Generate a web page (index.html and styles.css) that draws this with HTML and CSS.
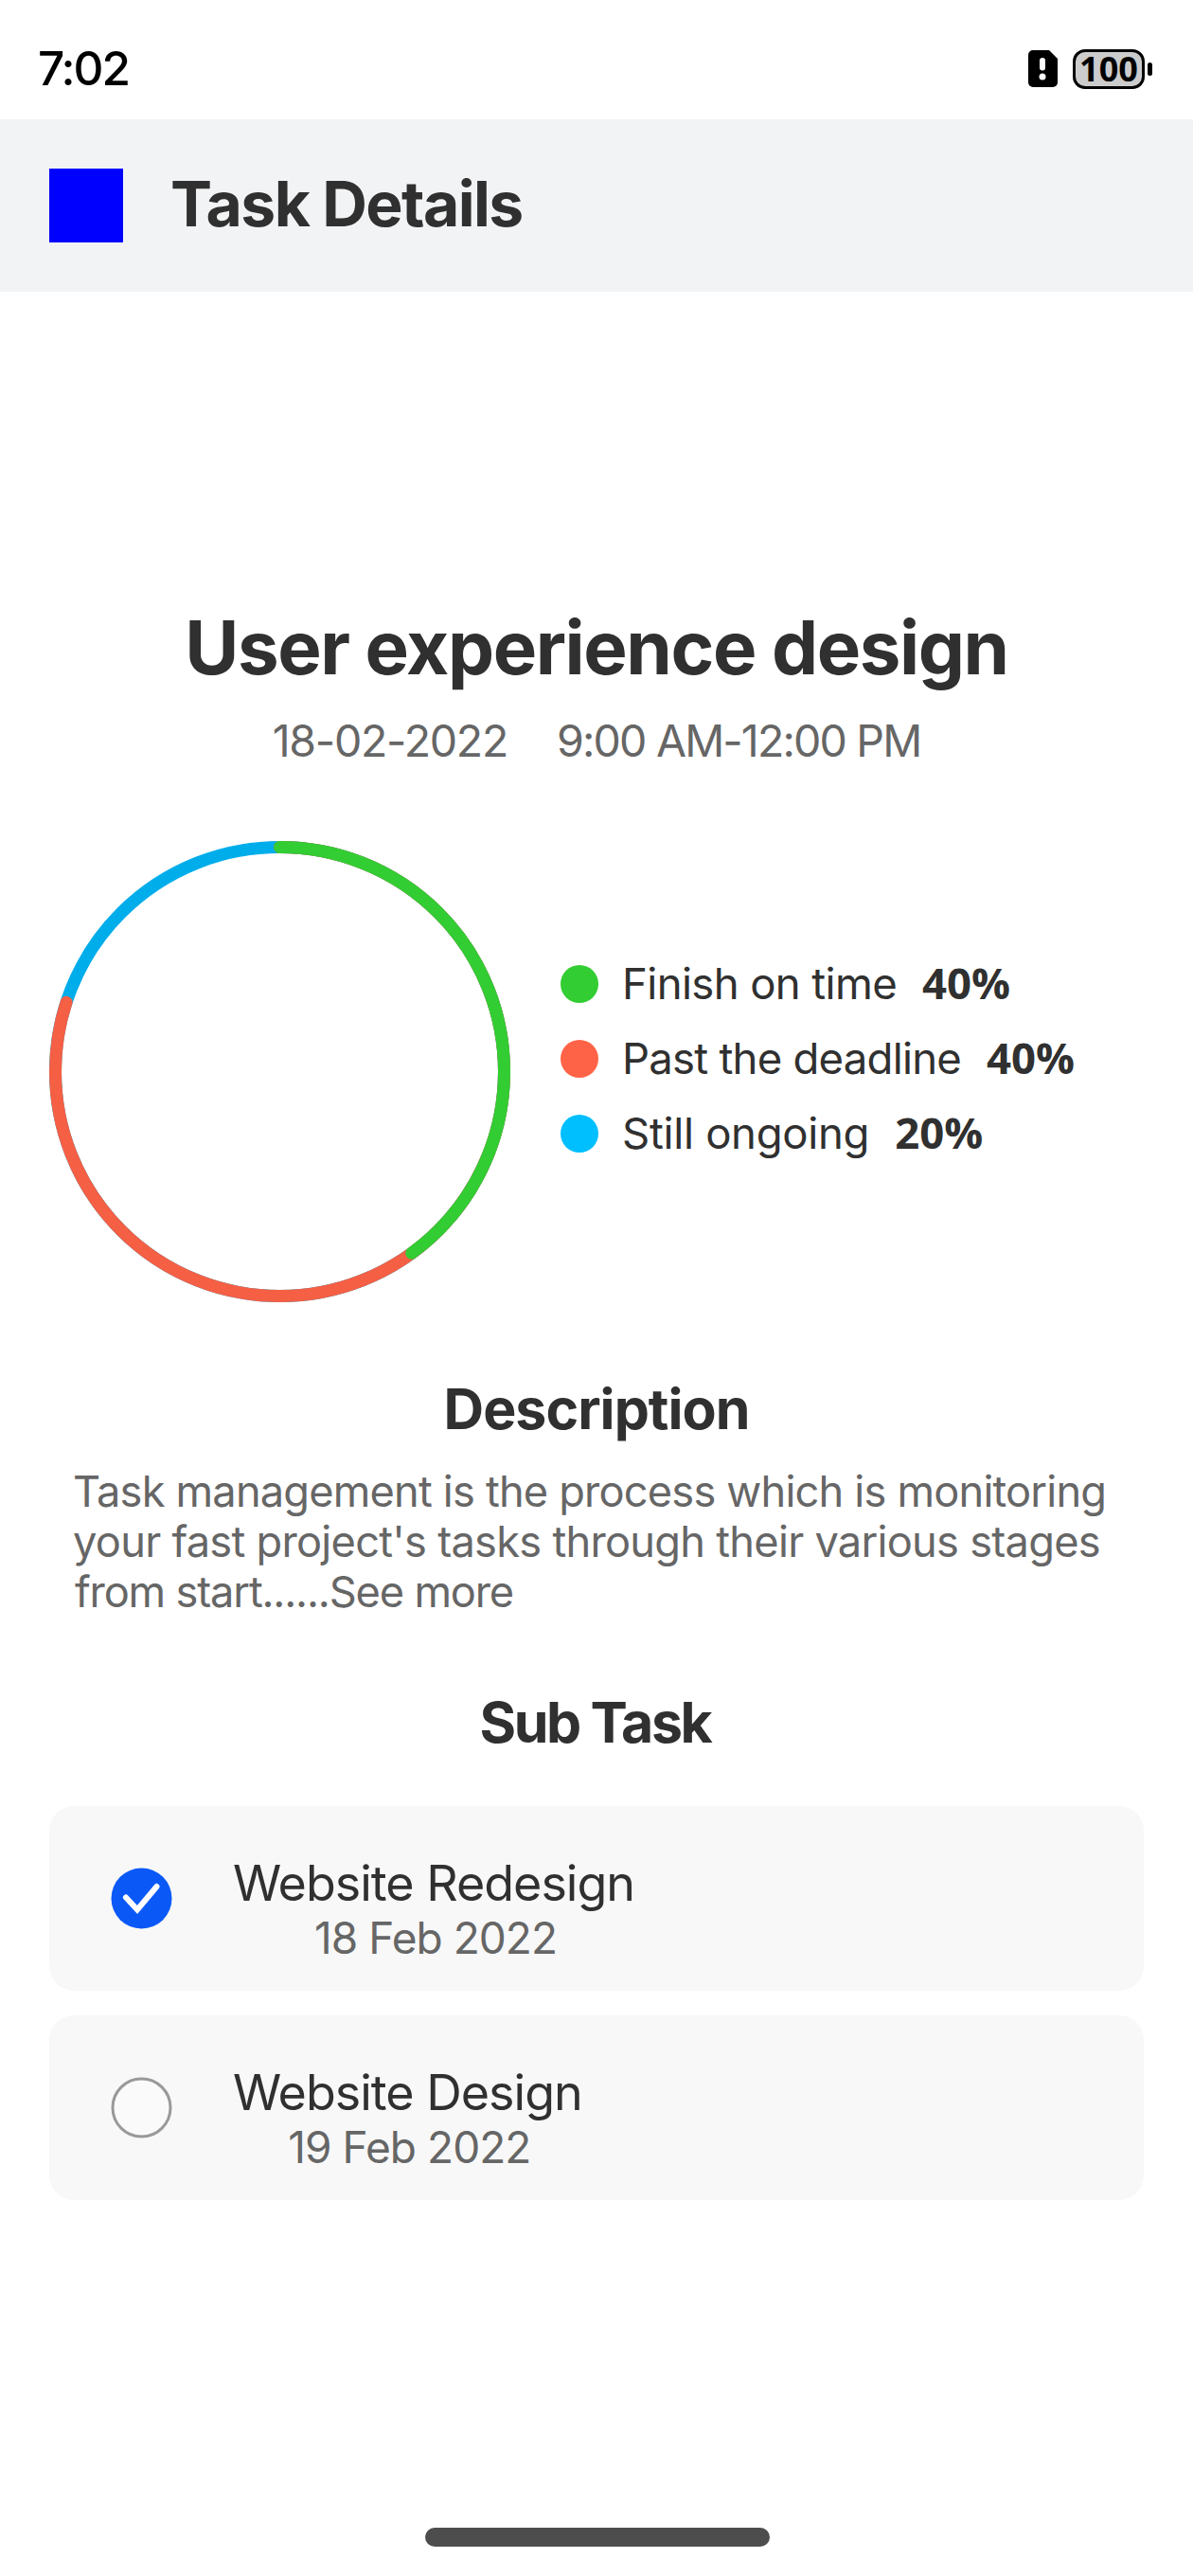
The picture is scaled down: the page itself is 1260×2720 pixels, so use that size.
FILE: index.html
```html
<!DOCTYPE html>
<html lang="en">
<head>
<meta charset="utf-8">
<title>Task Details</title>
<link rel="stylesheet" href="styles.css">
</head>
<body>
<div class="screen">
  <div class="status-bar">
    <span class="clock">7:02</span>
    <div class="status-icons">
      <svg class="sim-icon" viewBox="0 0 31 39" width="31" height="39">
        <path d="M5 0H22L31 9V34a5 5 0 0 1-5 5H5a5 5 0 0 1-5-5V5a5 5 0 0 1 5-5Z" fill="#000"/>
        <path d="M15 11V18.500" stroke="#fff" stroke-width="6" stroke-linecap="round"/>
        <circle cx="15" cy="28" r="3.500" fill="#fff"/>
      </svg>
      <div class="battery"><span class="battery-level">100</span></div>
      <div class="battery-tip"></div>
    </div>
  </div>

  <header class="app-bar">
    <div class="back-button"></div>
    <h1 class="app-title">Task Details</h1>
  </header>

  <main class="content">
    <h2 class="task-title">User experience design</h2>
    <div class="task-time">
      <span class="task-date">18-02-2022</span>
      <span class="task-hours">9:00 AM-12:00 PM</span>
    </div>

    <section class="progress">
      <svg class="ring" viewBox="0 0 487 487" width="487" height="487">
        <g fill="none" stroke-width="13" stroke-linecap="round" transform="rotate(-90 243.500 243.500)">
          <circle cx="243.500" cy="243.500" r="237" stroke="#00adeb"/>
          <circle cx="243.500" cy="243.500" r="237" stroke="#f55f44" pathLength="100" stroke-dasharray="80 100"/>
          <circle cx="243.500" cy="243.500" r="237" stroke="#32cd32" pathLength="100" stroke-dasharray="40 100"/>
        </g>
      </svg>
      <ul class="legend">
        <li class="legend-row"><i class="dot dot-done"></i><span class="legend-label">Finish on time</span><b class="legend-value">40%</b></li>
        <li class="legend-row"><i class="dot dot-late"></i><span class="legend-label label-late">Past the deadline</span><b class="legend-value">40%</b></li>
        <li class="legend-row"><i class="dot dot-ongoing"></i><span class="legend-label label-ongoing">Still ongoing</span><b class="legend-value">20%</b></li>
      </ul>
    </section>

    <h3 class="section-title description-title">Description</h3>
    <p class="description">Task management is the process which is monitoring<br><span class="description-middle">your fast project's tasks through their various stages</span><br><span class="description-end">from start......See more</span></p>

    <h3 class="section-title subtask-title">Sub Task</h3>
    <div class="subtasks">
      <div class="card">
        <svg class="check" viewBox="0 0 65 65" width="65" height="65">
          <circle cx="32.500" cy="32.500" r="32" fill="#0a59f7"/>
          <path d="M16 31.500L28 44.500L48.500 20" fill="none" stroke="#fff" stroke-width="6" stroke-linecap="round" stroke-linejoin="miter"/>
        </svg>
        <div class="card-text">
          <span class="card-title">Website Redesign</span>
          <span class="card-date">18 Feb 2022</span>
        </div>
      </div>
      <div class="card">
        <svg class="check" viewBox="0 0 65 65" width="65" height="65">
          <circle cx="32.500" cy="32.500" r="30.500" fill="#fafafa" stroke="#999" stroke-width="3"/>
        </svg>
        <div class="card-text">
          <span class="card-title">Website Design</span>
          <span class="card-date">19 Feb 2022</span>
        </div>
      </div>
    </div>
  </main>
  <div class="home-area"><div class="home-indicator"></div></div>
</div>
</body>
</html>
```
FILE: styles.css
```css
* { box-sizing: border-box; }
body { margin: 0; background: #fff; font-family: Inter, "Noto Sans", sans-serif; color: #303030; }
h1, h2, h3, p, ul { margin: 0; padding: 0; font-weight: 650; }
.screen { width: 1260px; height: 2720px; display: flex; flex-direction: column; background: #fff; }

.status-bar { height: 126px; display: flex; justify-content: space-between; padding: 42px 43px 0 40px; color: #000; }
.clock { font-size: 49.500px; line-height: 60px; font-weight: 500; letter-spacing: -2px; }
.status-icons { display: flex; align-items: center; height: 62px; }
.sim-icon { display: block; margin-right: 16px; margin-bottom: 2px; }
.battery { width: 76px; height: 42px; border: 3px solid #000; border-radius: 13px; background: #ccc; display: flex; align-items: center; justify-content: center; }
.battery-level { font-family: "Open Sans", sans-serif; font-size: 36px; line-height: 36px; font-weight: 700; padding-bottom: 1px; }
.battery-tip { width: 5px; height: 14px; margin-left: 3px; border-radius: 3px; background: #000; }

.app-bar { height: 182px; background: #f1f3f5; display: flex; align-items: center; padding: 0 52px; gap: 50px; }
.back-button { width: 78px; height: 78px; background: #00f; }
.app-title { font-size: 66px; line-height: 78px; letter-spacing: -1.620px; padding-bottom: 4px; }

.content { flex: 1; display: flex; flex-direction: column; padding: 330px 52px 0; }
.task-title { font-size: 78px; line-height: 92px; text-align: center; letter-spacing: -1.430px; }
.task-time { display: flex; justify-content: center; gap: 52px; margin-top: 24px; font-size: 46.500px; line-height: 56px; color: #666; }
.task-date { letter-spacing: -1.260px; }
.task-hours { letter-spacing: -1.830px; }

.progress { display: flex; align-items: center; margin-top: 78px; }
.ring { display: block; flex: none; }
.legend { list-style: none; margin-left: 52px; margin-bottom: 27px; display: flex; flex-direction: column; gap: 26px; }
.legend-row { display: flex; align-items: center; height: 53px; font-size: 45.500px; line-height: 53px; }
.dot { width: 40px; height: 40px; border-radius: 50%; margin-right: 25px; margin-left: 1px; }
.dot-done { background: #32cd32; }
.dot-late { background: #ff6347; }
.dot-ongoing { background: #00bfff; }
.legend-label { letter-spacing: -0.620px; margin-right: 27px; font-weight: 400; padding-bottom: 2px; }
.label-late { letter-spacing: -0.770px; }
.label-ongoing { letter-spacing: -0.300px; }
.legend-value { font-family: "Open Sans", sans-serif; font-weight: 700; padding-bottom: 4px; }

.section-title { font-size: 59px; line-height: 70px; text-align: center; letter-spacing: -0.980px; }
.description-title { margin-top: 78px; }
.description { margin-top: 25px; padding-left: 25px; font-size: 45.200px; line-height: 53px; font-weight: 400; letter-spacing: -0.810px; color: #666; white-space: nowrap; }
.description-middle { letter-spacing: -0.730px; }
.description-end { letter-spacing: -1.160px; margin-left: 2px; }
.subtask-title { margin-top: 77px; letter-spacing: -2.400px; padding-right: 3px; }

.subtasks { display: flex; flex-direction: column; gap: 26px; margin-top: 53px; }
.card { height: 195px; display: flex; align-items: center; padding-left: 65px; gap: 64px; background: #f8f8f8; border-radius: 26px; }
.check { display: block; flex: none; }
.card-text { display: flex; flex-direction: column; align-items: center; padding-top: 21px; }
.card-title { font-size: 52px; line-height: 61px; letter-spacing: -1px; }
.card-date { font-size: 46px; line-height: 54px; letter-spacing: -0.950px; padding-left: 4px; color: #666; }

.home-area { display: flex; justify-content: center; height: 51px; padding-left: 1px; }
.home-indicator { width: 364px; height: 20px; border-radius: 10px; background: #4d4d4d; }
```
